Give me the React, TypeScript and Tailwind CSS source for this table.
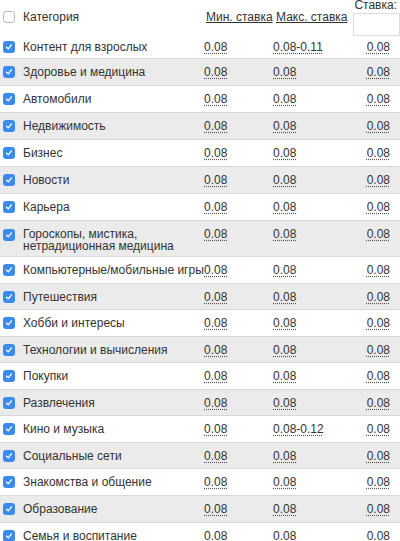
import React from "react";

type Row = { name: string; min: string; max: string; bid: string; h: string };

const rows: Row[] = [
  { name: "Контент для взрослых", min: "0.08", max: "0.08-0.11", bid: "0.08", h: "h-[23px]" },
  { name: "Здоровье и медицина", min: "0.08", max: "0.08", bid: "0.08", h: "h-[27px]" },
  { name: "Автомобили", min: "0.08", max: "0.08", bid: "0.08", h: "h-[27px]" },
  { name: "Недвижимость", min: "0.08", max: "0.08", bid: "0.08", h: "h-[27px]" },
  { name: "Бизнес", min: "0.08", max: "0.08", bid: "0.08", h: "h-[27px]" },
  { name: "Новости", min: "0.08", max: "0.08", bid: "0.08", h: "h-[27px]" },
  { name: "Карьера", min: "0.08", max: "0.08", bid: "0.08", h: "h-[27px]" },
  { name: "Гороскопы, мистика, нетрадиционная медицина", min: "0.08", max: "0.08", bid: "0.08", h: "h-[36px]" },
  { name: "Компьютерные/мобильные игры", min: "0.08", max: "0.08", bid: "0.08", h: "h-[27px]" },
  { name: "Путешествия", min: "0.08", max: "0.08", bid: "0.08", h: "h-[26px]" },
  { name: "Хобби и интересы", min: "0.08", max: "0.08", bid: "0.08", h: "h-[27px]" },
  { name: "Технологии и вычисления", min: "0.08", max: "0.08", bid: "0.08", h: "h-[26px]" },
  { name: "Покупки", min: "0.08", max: "0.08", bid: "0.08", h: "h-[27px]" },
  { name: "Развлечения", min: "0.08", max: "0.08", bid: "0.08", h: "h-[26px]" },
  { name: "Кино и музыка", min: "0.08", max: "0.08-0.12", bid: "0.08", h: "h-[27px]" },
  { name: "Социальные сети", min: "0.08", max: "0.08", bid: "0.08", h: "h-[26px]" },
  { name: "Знакомства и общение", min: "0.08", max: "0.08", bid: "0.08", h: "h-[27px]" },
  { name: "Образование", min: "0.08", max: "0.08", bid: "0.08", h: "h-[27px]" },
  { name: "Семья и воспитание", min: "0.08", max: "0.08", bid: "0.08", h: "h-[27px]" },
];

function CheckBox({ checked }: { checked: boolean }) {
  if (!checked) {
    return (
      <span className="block w-[12px] h-[12px] rounded-[3px] border border-[#b8b8b8] bg-white shrink-0" />
    );
  }
  return (
    <span className="flex items-center justify-center w-[12px] h-[12px] rounded-[3px] bg-[#3a8bf0] shrink-0">
      <svg width="8" height="8" viewBox="0 0 8 8">
        <path d="M1.6 4.2 L3.3 5.9 L6.4 1.8" fill="none" stroke="white" strokeWidth="1.3" strokeLinecap="round" strokeLinejoin="round" />
      </svg>
    </span>
  );
}

function Val({ v }: { v: string }) {
  return (
    <span className="underline decoration-dotted decoration-[#555] underline-offset-[1.5px] cursor-pointer">{v}</span>
  );
}

export default function App() {
  return (
    <div
      className="w-[400px] h-[541px] overflow-hidden bg-white text-[12px] text-[#333]"
      style={{ fontFamily: '"Liberation Sans", Arial, sans-serif' }}
    >
      <div className="mt-[-3px]">
        {/* header */}
        <div className="flex items-center h-[39px]">
          <div className="w-[23px] pl-[3px] flex items-center">
            <CheckBox checked={false} />
          </div>
          <div className="w-[181px] leading-[12px]">Категория</div>
          <div className="w-[70px] pl-[2px] underline leading-[12px]">Мин. ставка</div>
          <div className="w-[78px] pl-[2px] underline leading-[12px]">Макс. ставка</div>
          <div className="flex-1 flex flex-col items-end">
            <div className="leading-[14px] pr-[3px]">Ставка:</div>
            <div className="w-[47px] h-[23px] border border-[#dcdcdc] bg-white mt-[1px]" />
          </div>
        </div>
        {rows.map((r, i) => {
          const multi = r.name.length > 30;
          return (
            <div
              key={r.name}
              className={
                "flex border-b border-[#d8d8d8] " +
                r.h +
                " " +
                (multi ? "items-start " : "items-center ") +
                (i % 2 === 1 ? "bg-[#ebebeb]" : "bg-white")
              }
            >
              <div className={"w-[23px] pl-[3px] flex " + (multi ? "pt-[8px]" : "items-center")}>
                <CheckBox checked={true} />
              </div>
              <div className={"w-[181px] leading-[12px] " + (multi ? "pt-[7px]" : "")}>{r.name}</div>
              <div className={"w-[69px] leading-[12px] " + (multi ? "pt-[7px]" : "")}>
                <Val v={r.min} />
              </div>
              <div className={"w-[80px] leading-[12px] " + (multi ? "pt-[7px]" : "")}>
                <Val v={r.max} />
              </div>
              <div className={"flex-1 text-right pr-[10px] leading-[12px] " + (multi ? "pt-[7px]" : "")}>
                <Val v={r.bid} />
              </div>
            </div>
          );
        })}
      </div>
    </div>
  );
}
